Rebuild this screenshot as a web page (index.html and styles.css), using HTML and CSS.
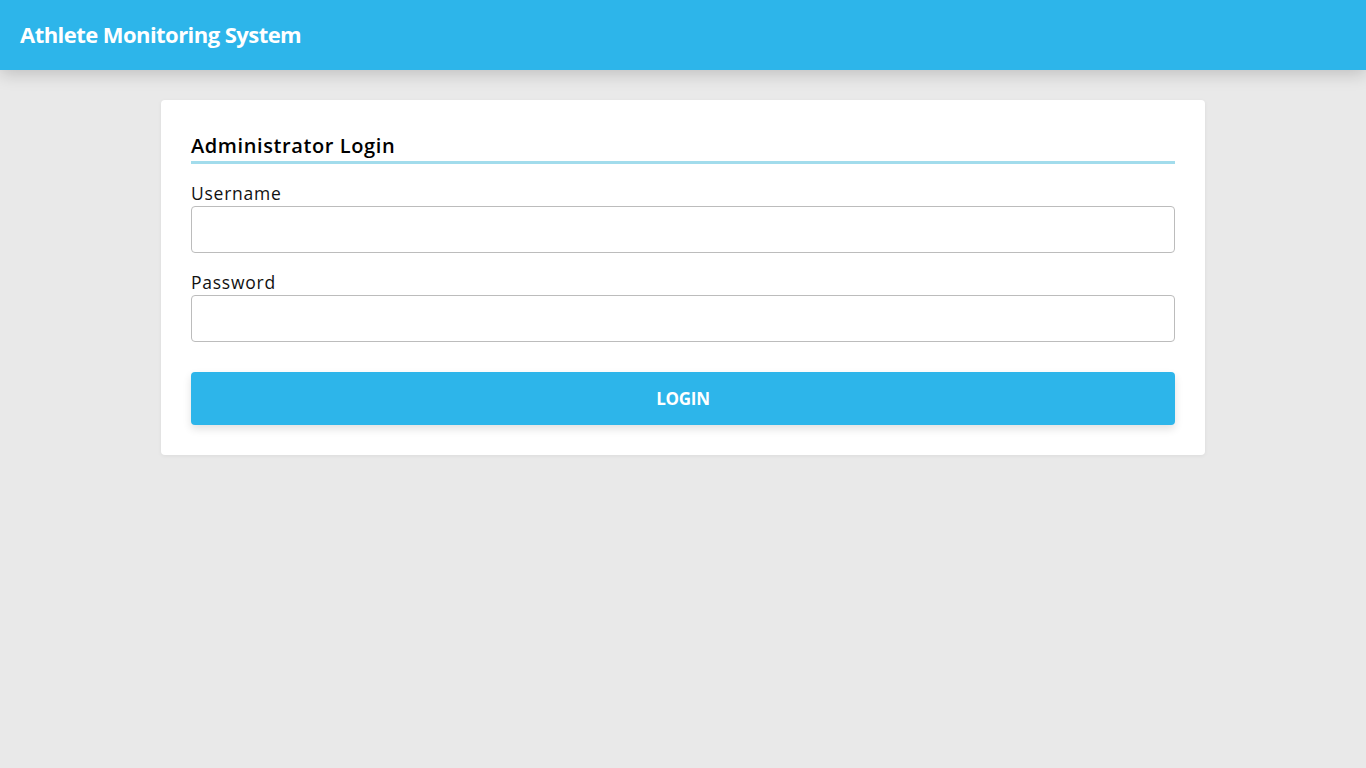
FILE: index.html
```html
<!DOCTYPE html>
<html lang="en">
<head>
<meta charset="utf-8">
<title>Athlete Monitoring System</title>
<link rel="stylesheet" href="styles.css">
</head>
<body>
<header class="topbar">
  <div class="brand">Athlete Monitoring System</div>
</header>
<main class="page">
  <section class="card">
    <h2 class="card-title">Administrator Login</h2>
    <form class="form">
      <label class="field">
        <span class="label">Username</span>
        <input class="input" type="text">
      </label>
      <label class="field">
        <span class="label">Password</span>
        <input class="input" type="password">
      </label>
      <button class="btn" type="button">LOGIN</button>
    </form>
  </section>
</main>
</body>
</html>
```
FILE: styles.css
```css
* { box-sizing: border-box; }
html, body { margin: 0; padding: 0; }
body {
  background: #e9e9e9;
  font-family: "Open Sans", "Noto Sans", sans-serif;
  color: #111;
  min-height: 768px;
}
.topbar {
  height: 70px;
  background: #2db5ea;
  display: flex;
  align-items: center;
  padding: 0 20px;
  box-shadow: 0 4px 16px rgba(0,0,0,0.18);
  position: relative;
  z-index: 1;
}
.brand {
  color: #fff;
  font-weight: 700;
  font-size: 22px;
  letter-spacing: -0.55px;
  margin-top: -2px;
}
.page {
  padding-top: 30px;
  display: flex;
  justify-content: center;
}
.card {
  width: 1044px;
  background: #fff;
  border-radius: 4px;
  padding: 30px;
  box-shadow: 0 1px 4px rgba(0,0,0,0.06);
}
.card-title {
  margin: 0;
  font-size: 20px;
  font-weight: 600;
  line-height: 28px;
  padding-top: 2px;
  padding-bottom: 1px;
  border-bottom: 3px solid #a2dcec;
  color: #000;
  letter-spacing: 0.6px;
}
.form {
  display: flex;
  flex-direction: column;
}
.field {
  display: flex;
  flex-direction: column;
}
.field:first-child { margin-top: 17px; }
.field + .field { margin-top: 17px; }
.label {
  font-size: 17.5px;
  line-height: 24px;
  color: #111;
  margin-bottom: 1px;
  letter-spacing: 0.75px;
}
.input {
  height: 47px;
  border: 1px solid #bcbcbc;
  border-radius: 4px;
  padding: 0 12px;
  font-size: 16px;
  font-family: inherit;
  background: #fff;
  outline: none;
}
.btn {
  margin-top: 30px;
  height: 53px;
  border: none;
  border-radius: 4px;
  background: #2db5ea;
  color: #fff;
  font-family: inherit;
  font-weight: 700;
  font-size: 17px;
  letter-spacing: -0.3px;
  box-shadow: 0 4px 8px rgba(0,0,0,0.12);
  cursor: pointer;
}
```
